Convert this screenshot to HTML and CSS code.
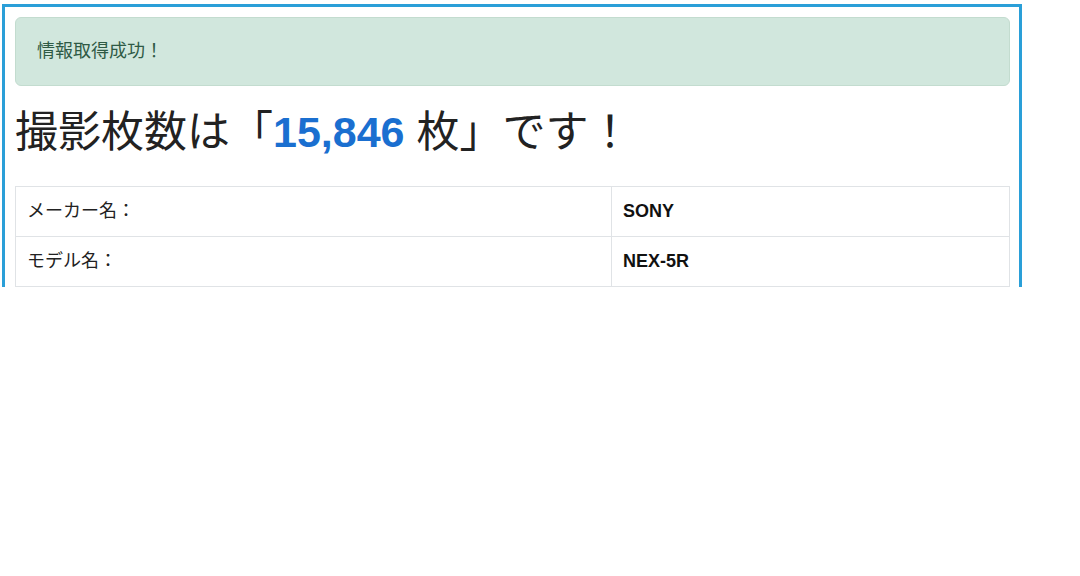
FILE: index.html
```html
<!DOCTYPE html>
<html lang="ja">
<head>
<meta charset="utf-8">
<link rel="stylesheet" href="styles.css">
</head>
<body>
<div class="frame">
  <div class="alert">情報取得成功！</div>
  <h1 class="title">撮影枚数は「<span class="count">15,846</span> 枚」です！</h1>
  <table class="info">
    <tr><td class="label">メーカー名：</td><td class="value">SONY</td></tr>
    <tr><td class="label">モデル名：</td><td class="value">NEX-5R</td></tr>
  </table>
</div>
</body>
</html>
```
FILE: styles.css
```css
html, body {
  margin: 0;
  padding: 0;
  background: #fff;
}
body {
  padding: 4px 0 0 2px;
  font-family: "Liberation Sans", "Noto Sans CJK JP", sans-serif;
  color: #222;
}
.frame {
  width: 995px;
  height: 270px;
  overflow: hidden;
  border: 3px solid #2a9fd8;
  border-bottom: none;
  padding: 10px 9px 0 10px;
}
.alert {
  background: #d1e7dd;
  border: 1px solid #c3dccf;
  border-radius: 6px;
  color: #2f5a45;
  font-size: 18px;
  line-height: 25px;
  padding: 21px 21px;
}
.title {
  font-weight: normal;
  font-size: 43px;
  line-height: 46px;
  margin: 23px 0 31px 0;
  color: #222;
}
.count {
  color: #1a6fd0;
  font-weight: bold;
}
.info {
  width: 100%;
  border-collapse: collapse;
  font-size: 18px;
}
.info td {
  border: 1px solid #e0e3e6;
  padding: 12px 11px;
  line-height: 25px;
}
.label {
  width: 573px;
}
.value {
  font-weight: bold;
  color: #111;
}
```
